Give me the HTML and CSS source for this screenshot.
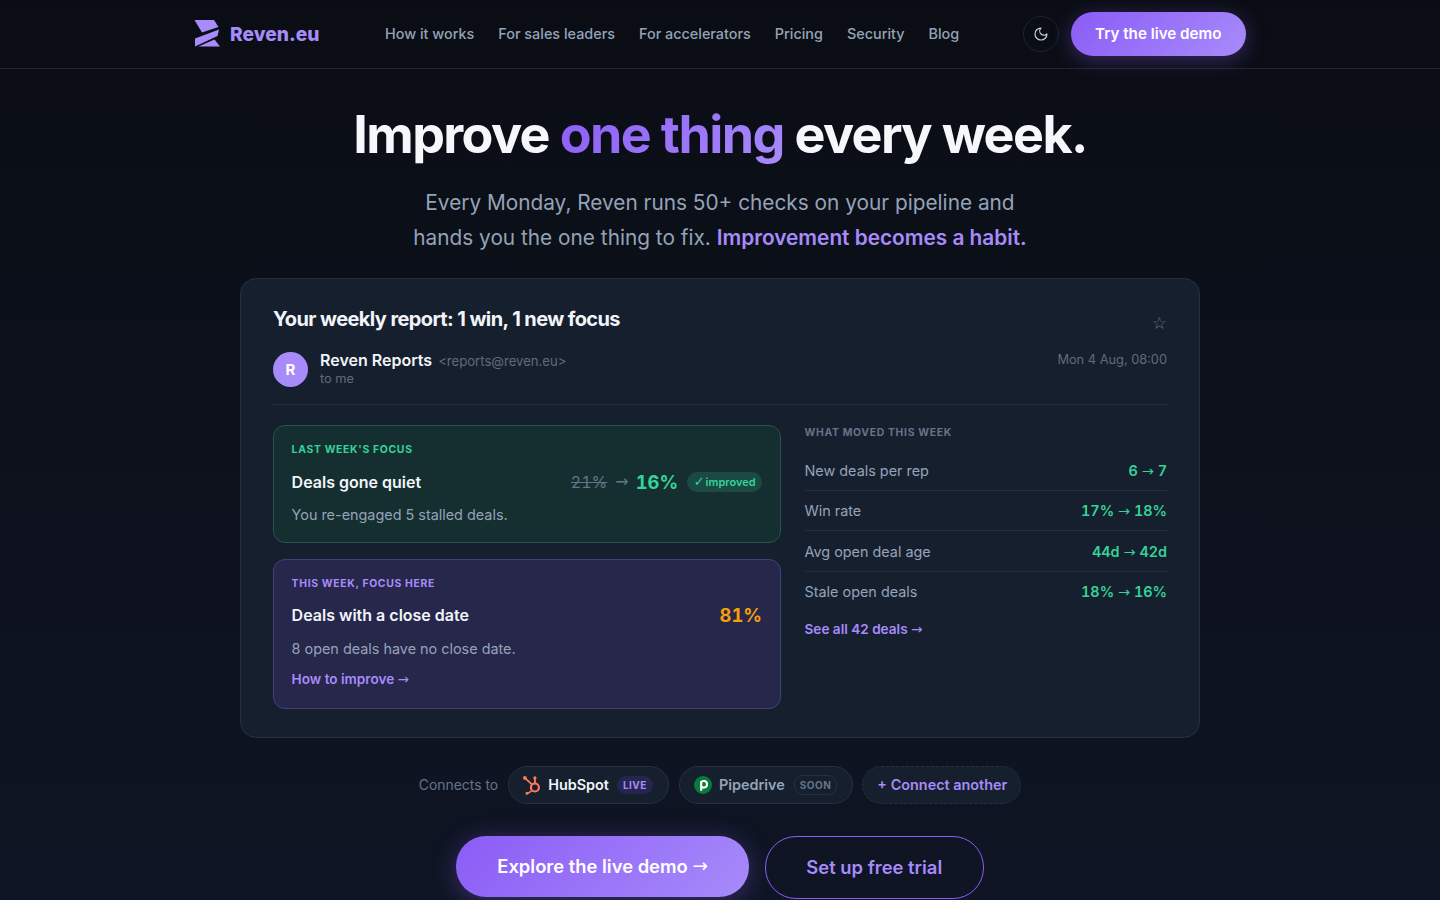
FILE: index.html
```html
<!DOCTYPE html>
<html lang="en">
<head>
  <meta charset="UTF-8" />
  <meta name="viewport" content="width=device-width, initial-scale=1.0" />
  <title>Reven.eu</title>
  <link rel="stylesheet" href="styles.css">
</head>
<body>
  <header class="topbar">
    <div class="topbar-inner">
      <a class="logo" href="#">
        <svg class="logo-mark" viewBox="0 0 26 27" width="26" height="27" aria-hidden="true">
          <path d="M0.500 0H20L24.500 7L8 12.500Z" fill="#a78bfa"/>
          <path d="M25 9.500L23.500 16L1 26.500L1 18.500Z" fill="#a78bfa"/>
          <path d="M12.500 23L20.500 19.500L26 26.500H4.500Z" fill="#a78bfa"/>
        </svg>
        <span>Reven.eu</span>
      </a>
      <nav class="nav">
        <a href="#">How it works</a>
        <a href="#">For sales leaders</a>
        <a href="#">For accelerators</a>
        <a href="#">Pricing</a>
        <a href="#">Security</a>
        <a href="#">Blog</a>
      </nav>
      <div class="topbar-actions">
        <button class="theme-btn" aria-label="Toggle theme">
          <svg viewBox="0 0 24 24" width="16" height="16" fill="none" stroke="#cbd5e1" stroke-width="1.700" stroke-linecap="round" stroke-linejoin="round">
            <path d="M12 3a6 6 0 0 0 9 9 9 9 0 1 1-9-9Z"/>
          </svg>
        </button>
        <a class="btn-nav" href="#">Try the live demo</a>
      </div>
    </div>
  </header>

  <main class="hero">
    <h1>Improve <span class="accent">one thing</span> every week.</h1>
    <p class="lead">Every Monday, Reven runs 50+ checks on your pipeline and<br>hands you the one thing to fix. <strong>Improvement becomes a habit.</strong></p>

    <section class="report">
      <div class="report-head">
        <h2>Your weekly report: 1 win, 1 new focus</h2>
        <span class="star">☆</span>
      </div>
      <div class="sender">
        <div class="avatar">R</div>
        <div class="sender-info">
          <div><b>Reven Reports</b> <span class="addr">&lt;reports@reven.eu&gt;</span></div>
          <div class="to">to me</div>
        </div>
        <div class="date">Mon 4 Aug, 08:00</div>
      </div>

      <div class="report-body">
        <div class="focus-col">
          <div class="focus focus-last">
            <div class="eyebrow eyebrow-green">LAST WEEK'S FOCUS</div>
            <div class="focus-row">
              <div class="focus-title">Deals gone quiet</div>
              <div class="focus-score">
                <s>21%</s>
                <span class="arw">→</span>
                <span class="score-green">16%</span>
                <span class="pill-improved"><span class="check">✓</span>improved</span>
              </div>
            </div>
            <p class="focus-text">You re-engaged 5 stalled deals.</p>
          </div>
          <div class="focus focus-now">
            <div class="eyebrow eyebrow-purple">THIS WEEK, FOCUS HERE</div>
            <div class="focus-row">
              <div class="focus-title">Deals with a close date</div>
              <div class="score-amber">81%</div>
            </div>
            <p class="focus-text">8 open deals have no close date.</p>
            <a class="link" href="#">How to improve <span class="arw">→</span></a>
          </div>
        </div>

        <div class="moved">
          <div class="eyebrow eyebrow-grey">WHAT MOVED THIS WEEK</div>
          <div class="moved-row"><span>New deals per rep</span><b>6 <span class="arw">→</span> 7</b></div>
          <div class="moved-row"><span>Win rate</span><b>17% <span class="arw">→</span> 18%</b></div>
          <div class="moved-row"><span>Avg open deal age</span><b>44d <span class="arw">→</span> 42d</b></div>
          <div class="moved-row"><span>Stale open deals</span><b>18% <span class="arw">→</span> 16%</b></div>
          <a class="link see-all" href="#">See all 42 deals <span class="arw">→</span></a>
        </div>
      </div>
    </section>

    <div class="connects">
      <span class="connects-label">Connects to</span>
      <div class="chip chip-live">
        <svg viewBox="0 0 24 24" width="20" height="20" aria-hidden="true">
          <circle cx="15.500" cy="15" r="4.800" fill="none" stroke="#ff7a59" stroke-width="2.600"/>
          <path d="M15.500 4V10M4 4L11.500 11" fill="none" stroke="#ff7a59" stroke-width="2.200" stroke-linecap="round"/>
          <path d="M11.500 19L7 22" fill="none" stroke="#ff7a59" stroke-width="2"/>
          <circle cx="3.500" cy="3.500" r="2.300" fill="#ff7a59"/>
          <circle cx="15.500" cy="3.500" r="2" fill="#ff7a59"/>
          <circle cx="6" cy="22" r="1.800" fill="#ff7a59"/>
        </svg>
        <span>HubSpot</span>
        <em class="tag tag-live">LIVE</em>
      </div>
      <div class="chip chip-soon">
        <svg viewBox="0 0 20 20" width="18" height="18" aria-hidden="true">
          <circle cx="10" cy="10" r="10" fill="#0a7a3c"/>
          <path d="M8 16.500V5.500M8 7C9 4.800 14.500 4.800 14.500 9.200S9 13.500 8 11.500" fill="none" stroke="#fff" stroke-width="2.400"/>
        </svg>
        <span>Pipedrive</span>
        <em class="tag tag-soon">SOON</em>
      </div>
      <div class="chip chip-add">+ Connect another</div>
    </div>

    <div class="cta-row">
      <a class="btn-primary" href="#">Explore the live demo&nbsp;<span class="arw">→</span></a>
      <a class="btn-outline" href="#">Set up free trial</a>
    </div>
  </main>
</body>
</html>
```
FILE: styles.css
```css
* {
  box-sizing: border-box;
}

body {
  margin: 0;
  font-family: 'Inter', sans-serif;
  color: #f1f5f9;
  background: linear-gradient(180deg, #0a0d14 0%, #0f1524 100%);
  min-height: 900px;
}

a {
  text-decoration: none;
}

/* arrows come from a narrower fallback face than Inter's own */
.arw {
  font-family: 'DejaVu Sans', sans-serif;
  font-weight: 400;
  line-height: 1;
}

.topbar {
  height: 69px;
  border-bottom: 1px solid #1e2430;
}

.topbar-inner {
  max-width: 1100px;
  height: 68px;
  margin: 0 auto;
  padding: 0 24px 1px;
  display: flex;
  align-items: center;
}

.logo {
  display: flex;
  align-items: center;
  gap: 10px;
  width: 191px;
  font-size: 19.200px;
  font-weight: 800;
  color: #a78bfa;
}

.nav {
  display: flex;
  gap: 24px;
}

.nav a {
  color: #94a3b8;
  font-size: 14.400px;
  font-weight: 500;
}

.topbar-actions {
  margin-left: auto;
  display: flex;
  align-items: center;
  gap: 12px;
}

.theme-btn {
  width: 36px;
  height: 36px;
  border-radius: 50%;
  border: 1px solid #1e2430;
  background: transparent;
  display: flex;
  align-items: center;
  justify-content: center;
  padding: 0;
}

.btn-nav {
  height: 44px;
  padding: 0 24.500px;
  border-radius: 22px;
  display: flex;
  align-items: center;
  color: #fff;
  font-size: 15.200px;
  font-weight: 600;
  background: linear-gradient(135deg, #8b5cf6, #a78bfa);
  box-shadow: 0 4px 20px rgba(139, 92, 246, 0.35);
}

.hero {
  display: flex;
  flex-direction: column;
  align-items: center;
}

h1 {
  margin: 28px 0 0;
  font-size: 52px;
  line-height: 76px;
  font-weight: 700;
  letter-spacing: -1.600px;
  color: #f5f7fb;
}

.accent {
  background: linear-gradient(135deg, #8b5cf6, #a78bfa);
  -webkit-background-clip: text;
  background-clip: text;
  color: transparent;
}

.lead {
  margin: 12px 0 0;
  font-size: 20.800px;
  line-height: 35.360px;
  text-align: center;
  color: #94a3b8;
}

.lead strong {
  color: #a78bfa;
  font-weight: 600;
}

.report {
  width: 960px;
  margin-top: 22px;
  padding: 24px 32px 28px;
  background: #161f2e;
  border: 1px solid #263041;
  border-radius: 16px;
}

.report-head {
  display: flex;
  justify-content: space-between;
  align-items: center;
}

h2 {
  margin: 0;
  font-size: 20px;
  line-height: 32px;
  font-weight: 700;
  letter-spacing: -0.600px;
  color: #f1f5f9;
}

.star {
  padding-top: 8px;
  color: #64748b;
  font-family: 'DejaVu Sans', sans-serif;
  font-size: 17px;
}

.sender {
  display: flex;
  align-items: center;
  gap: 12px;
  margin-top: 15px;
  padding-bottom: 17px;
  border-bottom: 1px solid #263041;
}

.avatar {
  width: 35px;
  height: 35px;
  margin-top: 2px;
  border-radius: 50%;
  background: #a78bfa;
  color: #fff;
  font-weight: 700;
  font-size: 15px;
  display: flex;
  align-items: center;
  justify-content: center;
}

.sender-info {
  flex: 1;
  font-size: 16px;
  font-weight: 600;
  line-height: 20px;
}

.sender-info b {
  font-weight: 600;
}

.addr {
  margin-left: 2px;
  font-size: 13.120px;
  font-weight: 400;
  color: #5f6b7d;
}

.to {
  font-size: 12.800px;
  font-weight: 400;
  line-height: 15px;
  color: #5f6b7d;
}

.date {
  align-self: flex-start;
  font-size: 12.800px;
  line-height: 20px;
  color: #5f6b7d;
}

.report-body {
  display: grid;
  grid-template-columns: 508px 1fr;
  gap: 23.500px;
  margin-top: 20px;
}

.focus-col {
  display: flex;
  flex-direction: column;
  gap: 16px;
}

.focus {
  padding: 16px 18px 15px 17.600px;
  border-radius: 12px;
}

.focus-last {
  padding-bottom: 16px;
  background: #152e30;
  border: 1px solid #245550;
}

.focus-now {
  background: #26274a;
  border: 1px solid #41417f;
}

.eyebrow {
  font-size: 10.400px;
  line-height: 15px;
  font-weight: 700;
  letter-spacing: 0.065em;
}

.eyebrow-green {
  color: #34d399;
}

.eyebrow-purple {
  color: #a78bfa;
}

.eyebrow-grey {
  color: #64748b;
  margin-bottom: 11px;
}

.focus-row {
  display: flex;
  justify-content: space-between;
  align-items: center;
  margin-top: 8px;
  height: 32px;
}

.focus-last .focus-row {
  margin-top: 9px;
}

.focus-last .focus-text {
  margin-top: 6px;
}

.focus-title {
  font-size: 16px;
  font-weight: 600;
  color: #f1f5f9;
}

.focus-score {
  display: flex;
  align-items: center;
  gap: 8px;
  font-size: 16px;
  font-variant-numeric: tabular-nums;
  color: #64748b;
}

.score-green {
  margin: 0 1px 0 -1px;
  font-size: 18.400px;
  font-weight: 700;
  color: #34d399;
}

.score-amber {
  font-size: 18.400px;
  font-weight: 700;
  font-variant-numeric: tabular-nums;
  color: #f59e0b;
}

.pill-improved {
  padding: 3px 6.500px;
  border-radius: 11px;
  background: #1b4a42;
  color: #34d399;
  font-size: 11px;
  font-weight: 600;
}

.check {
  font-family: 'DejaVu Sans', sans-serif;
  font-size: 13px;
  font-weight: 700;
  line-height: 1;
  margin-right: 1px;
}

.focus-text {
  margin: 7px 0 0;
  font-size: 14.400px;
  line-height: 22px;
  color: #94a3b8;
}

.link {
  color: #a78bfa;
  font-size: 13.600px;
  line-height: 17px;
  font-weight: 600;
}

.focus-now .link {
  display: block;
  margin: 11px 0 5px;
}

.moved-row {
  display: flex;
  justify-content: space-between;
  align-items: center;
  height: 40.330px;
  font-size: 14.400px;
  color: #94a3b8;
  border-bottom: 1px solid #263041;
}

.moved-row:last-of-type {
  border-bottom: none;
}

.moved-row b {
  color: #34d399;
  font-weight: 600;
  font-variant-numeric: tabular-nums;
}

.see-all {
  display: block;
  margin-top: 9px;
}

.connects {
  display: flex;
  align-items: center;
  gap: 10px;
  margin-top: 28px;
}

.connects-label {
  font-size: 13.920px;
  color: #64748b;
}

.chip {
  height: 38px;
  padding: 0 15px 0 13px;
  border-radius: 19px;
  border: 1px solid #263041;
  background: #161f2e;
  display: flex;
  align-items: center;
  gap: 6px;
  font-size: 14.400px;
  font-weight: 600;
}

.chip .tag {
  margin-left: 2px;
}

.chip-soon {
  padding-left: 14px;
  gap: 7px;
  color: #94a3b8;
}

.chip-add {
  margin-left: -1px;
  padding: 0 13px 0 14px;
  color: #a78bfa;
  border-style: dashed;
}

.tag {
  font-style: normal;
  font-size: 10px;
  font-weight: 700;
  letter-spacing: 0.05em;
  padding: 3px 6px;
  border-radius: 9px;
}

.tag-live {
  background: #252650;
  color: #a78bfa;
}

.tag-soon {
  padding: 3px 5px;
  border: 1px solid #263041;
  color: #64748b;
}

.cta-row {
  display: flex;
  align-items: flex-start;
  gap: 16px;
  margin-top: 32px;
}

.btn-primary {
  height: 61px;
  padding: 0 41px;
  border-radius: 30px;
  display: flex;
  align-items: center;
  color: #fff;
  font-size: 18.400px;
  font-weight: 600;
  background: linear-gradient(135deg, #8b5cf6, #a78bfa);
  box-shadow: 0 4px 24px rgba(139, 92, 246, 0.35);
}

.btn-outline {
  height: 63px;
  padding: 0 40.500px;
  border-radius: 31px;
  border: 1px solid #8b5cf6;
  display: flex;
  align-items: center;
  color: #a78bfa;
  font-size: 18.400px;
  font-weight: 600;
}
```
